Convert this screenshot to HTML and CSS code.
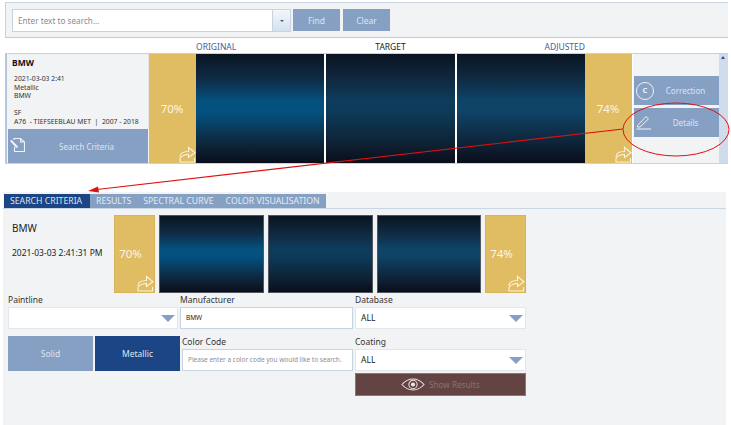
FILE: index.html
```html
<!DOCTYPE html>
<html lang="en">
<head>
<meta charset="utf-8">
<title>Search</title>
<link rel="stylesheet" href="styles.css">
</head>
<body>
<svg width="0" height="0" class="defs">
  <symbol id="share" viewBox="0 0 17 17">
    <path d="M1 11C1 7.500 4 5.500 9.500 5.500V1.500L16 6.800L9.500 11.500V8.500C5.500 8.500 3 9.500 1 12.500V16H15.500V12" fill="none" stroke="currentColor" stroke-width="1.100"/>
  </symbol>
</svg>
<div class="page">
  <section class="searchbar">
    <div class="combo">
      <span class="combo-text">Enter text to search...</span>
      <span class="combo-btn"><i class="mini-caret"></i></span>
    </div>
    <button class="btn">Find</button>
    <button class="btn">Clear</button>
  </section>
  <div class="headers">
    <span class="h-original">ORIGINAL</span>
    <span class="h-target">TARGET</span>
    <span class="h-adjusted">ADJUSTED</span>
  </div>
  <section class="result">
    <div class="info">
      <div class="info-text">
        <h2>BMW</h2>
        <p>2021-03-03 2:41<br>Metallic<br>BMW<br><br>SF<br>A76 &nbsp;- TIEFSEEBLAU MET &nbsp;| &nbsp;2007 - 2018</p>
      </div>
      <div class="criteria">
        <svg class="criteria-icon" viewBox="0 0 16 16" width="16" height="16"><path d="M5 3V1.500H11.500L15.500 5V14.500H5.500V10M11.500 1.500V5H15.500" fill="none" stroke="currentColor" stroke-width="1.100"/><path d="M1 4L2.500 2.800L8.500 9L8.800 11L6.800 10.500Z" fill="currentColor"/></svg>
        <span>Search Criteria</span>
      </div>
    </div>
    <div class="score">70%<svg class="share"><use href="#share"/></svg></div>
    <div class="panel panel-original"></div>
    <div class="panel panel-target"></div>
    <div class="panel panel-adjusted"></div>
    <div class="score score-right">74%<svg class="share"><use href="#share"/></svg></div>
    <div class="actions">
      <div class="action">
        <span class="c-icon">C</span>
        <span class="action-label">Correction</span>
      </div>
      <div class="action">
        <svg class="pen-icon" viewBox="0 0 16 16" width="16" height="16"><path d="M1.500 11.500L10 2.500L12.500 4.800L4 13H1.500ZM0.500 15H15" fill="none" stroke="currentColor" stroke-width="1"/></svg>
        <span class="action-label">Details</span>
      </div>
    </div>
    <div class="scroll"><i class="up-caret"></i></div>
  </section>
  <section class="details">
    <nav class="tabs">
      <span class="tab tab-active">SEARCH CRITERIA</span>
      <span class="tab">RESULTS</span>
      <span class="tab">SPECTRAL CURVE</span>
      <span class="tab">COLOR VISUALISATION</span>
    </nav>
    <div class="summary">
      <div class="summary-text">
        <div class="summary-name">BMW</div>
        <div class="summary-date">2021-03-03 2:41:31 PM</div>
      </div>
      <div class="score score-small">70%<svg class="share"><use href="#share"/></svg></div>
      <div class="panel panel-small panel-original"></div>
      <div class="panel panel-small panel-target"></div>
      <div class="panel panel-small panel-adjusted"></div>
      <div class="score score-small">74%<svg class="share"><use href="#share"/></svg></div>
    </div>
    <div class="form">
      <div class="field f-paint">
        <label>Paintline</label>
        <div class="select"><i class="caret"></i></div>
      </div>
      <div class="field f-manu">
        <label>Manufacturer</label>
        <div class="select select-blue small-text">BMW</div>
      </div>
      <div class="field f-db">
        <label>Database</label>
        <div class="select">ALL<i class="caret"></i></div>
      </div>
      <div class="toggles">
        <span class="toggle">Solid</span>
        <span class="toggle toggle-on">Metallic</span>
      </div>
      <div class="field f-code">
        <label>Color Code</label>
        <div class="select select-blue hint">Please enter a color code you would like to search.</div>
      </div>
      <div class="field f-coat">
        <label>Coating</label>
        <div class="select">ALL<i class="caret"></i></div>
        <div class="show">
          <svg viewBox="0 0 26 14" width="24" height="13"><path d="M1 7C5 2.500 9 1 13 1S21 2.500 25 7C21 11.500 17 13 13 13S5 11.500 1 7Z" fill="none" stroke="currentColor" stroke-width="1.100"/><circle cx="13" cy="7" r="4.500" fill="none" stroke="currentColor" stroke-width="1.100"/><circle cx="13" cy="7" r="2.300" fill="currentColor"/></svg>
          <span>Show Results</span>
        </div>
      </div>
    </div>
  </section>
  <svg class="annotation" viewBox="0 0 731 425" width="731" height="425">
    <ellipse cx="676" cy="129.500" rx="53" ry="26.500" fill="none" stroke="#e01010" stroke-width="1"/>
    <path d="M623 129L97 189.500" fill="none" stroke="#e01010" stroke-width="1.200"/>
    <path d="M88 191L98 186.500L99 192.500Z" fill="#e01010"/>
  </svg>
</div>
</body>
</html>
```
FILE: styles.css
```css
* { box-sizing: border-box; }
html, body { margin: 0; padding: 0; background: #fff; }
body { font-family: "Noto Sans", "Open Sans", sans-serif; color: #222; overflow: hidden; }
.defs { position: absolute; }
.page { position: relative; width: 731px; height: 425px; overflow: hidden; }

.searchbar { margin: 2px 3px 0 5px; height: 36px; background: #f1f3f5; border: 1px solid #c9d3df; border-bottom: 1px solid #c8c8c8; border-right: 0; display: flex; align-items: flex-start; padding: 6px 0 0 6px; }
.combo { width: 279px; height: 23px; background: #fff; border: 1px solid #c6d3e3; display: flex; justify-content: space-between; margin-right: 2px; }
.combo-text { font-size: 8.200px; line-height: 21px; color: #8c8c8c; padding-left: 5px; }
.combo-btn { width: 18px; border-left: 1px solid #c6d3e3; background: linear-gradient(#f3f7fb, #d5e1ef); display: flex; align-items: center; justify-content: center; }
.mini-caret { border: 2px solid transparent; border-top: 2px solid #556; border-bottom: 0; }
.btn { width: 47px; height: 22px; margin-right: 3px; border: 0; padding: 0; background: #86a0c3; color: #dfe6ef; font: 8.500px "Noto Sans", sans-serif; }

.headers { height: 16px; margin: 0 3px 0 5px; border-bottom: 1px solid #cfcfcf; display: grid; grid-template-columns: 191px 128px 2px 129px 2px 128px; font-size: 8.500px; line-height: 17px; }
.h-original { grid-column: 2; color: #3f62a0; }
.h-target { grid-column: 4; color: #222; text-align: center; }
.h-adjusted { grid-column: 6; color: #3f62a0; text-align: right; }

.result { margin: 0 3px 0 5px; height: 110px; display: flex; border-bottom: 1px solid #c9d3df; }
.info { width: 144px; flex: none; padding-left: 1px; border-left: 2px solid #b5c7de; background: #f1f3f5; display: flex; flex-direction: column; }
.info-text { flex: 1; padding-left: 4px; border-right: 1px solid #e5e5e5; }
.info-text h2 { margin: 2px 0 0 0; font-size: 8.500px; line-height: 14px; font-weight: 700; color: #111; }
.info-text p { margin: 5px 0 0 2px; font-size: 6.800px; line-height: 8.500px; color: #333; white-space: nowrap; }
.criteria { height: 34px; background: #86a0c3; color: #dde5ef; display: flex; align-items: center; font-size: 8px; padding-left: 1px; margin-right: 1px; }
.criteria-icon { flex: none; color: #eef2f7; margin-top: -3px; }
.criteria span { margin-left: 34px; }

.score { width: 47px; flex: none; background: #e0bc62; color: #fbf6e6; font-size: 11.500px; display: flex; align-items: center; justify-content: center; position: relative; padding-right: 1px; }
.share { position: absolute; right: 0; bottom: 0; width: 17px; height: 17px; color: #fbf3dc; }
.panel { flex: none; width: 128px; }
.panel-original { background: linear-gradient(#0a1522, #0f2b43 22%, #04507f 43%, #04507f 54%, #0e2335 85%, #0a0e1c); }
.panel-target { margin: 0 2px; width: 129px; background: linear-gradient(#0a1421, #10283f 22%, #0e3c5c 43%, #0d3a58 54%, #0e1f30 85%, #0a0d1b); }
.panel-adjusted { background: linear-gradient(#0a1522, #0f2a41 22%, #0f4469 43%, #0f4267 54%, #0e2032 85%, #0a0d1b); }
.actions { width: 86px; flex: none; margin-left: 1px; background: #f1f3f5; padding: 22px 0 0 1px; display: flex; flex-direction: column; gap: 3px; }
.action { height: 29px; width: 85px; background: #86a0c3; color: #dde5ef; display: flex; align-items: center; font-size: 8px; position: relative; }
.action-label { flex: 1; text-align: center; padding-left: 18px; }
.c-icon { position: absolute; left: 2px; top: 6px; width: 18px; height: 18px; border: 1.500px solid #eef2f7; border-radius: 50%; font-size: 7.500px; font-weight: 700; line-height: 15px; text-align: center; color: #eef2f7; }
.pen-icon { position: absolute; left: 2px; top: 6px; color: #eef2f7; }
.scroll { width: 9px; flex: none; background: #d0dcec; position: relative; }
.up-caret { position: absolute; left: 2px; top: 2px; border: 2.500px solid transparent; border-bottom: 3px solid #33527f; border-top: 0; }

.details { position: absolute; left: 3px; right: 5px; top: 192px; bottom: 0; background: #f1f3f5; }
.tabs { display: flex; height: 17px; padding: 2px 0 0 1px; border-bottom: 1px solid #c9d6e6; }
.tab { background: #86a0c3; color: #e4eaf2; font-size: 8.700px; line-height: 15px; padding: 0 6px; white-space: nowrap; }
.tab-active { background: #1b4585; color: #dbe4f0; width: 86px; }
.summary { display: flex; height: 78px; margin-top: 6px; }
.summary-text { width: 111px; padding-left: 9px; font-size: 8.500px; }
.summary-name { font-size: 10px; line-height: 14px; margin-top: 6px; }
.summary-date { margin-top: 12px; font-size: 8.500px; line-height: 12px; white-space: nowrap; }
.score-small { width: 41px; border: 1px solid #d6b35c; padding-right: 8px; padding-bottom: 2px; }
.panel-small { width: 105px; margin: 0 0 0 4px; border: 1px solid #50565e; }
.panel-small.panel-adjusted { margin-right: 4px; width: 104px; }

.form { display: grid; grid-template-columns: 172px 175px 171px; grid-template-rows: 36px 67px; margin-left: 5px; }
.field label { display: block; font-size: 8.500px; line-height: 14px; color: #333; }
.select { position: relative; height: 22px; background: #fff; border: 1px solid #e3e6ea; font-size: 8.500px; line-height: 20px; padding-left: 5px; }
.select-blue { border-color: #c6d3e3; }
.small-text { font-size: 6.500px; }
.hint { font-size: 6.500px; color: #8a8f96; white-space: nowrap; }
.caret { position: absolute; right: 2px; top: 7px; border: 7px solid transparent; border-top: 7px solid #86a0c3; border-bottom: 0; }
.f-paint .select { width: 170px; }
.f-manu .select { width: 173px; }
.f-db .select, .f-coat .select { width: 171px; }
.toggles { display: flex; gap: 2px; margin-top: 7px; height: 35px; }
.toggle { width: 85px; background: #86a0c3; color: #dde5ef; font-size: 8.500px; display: flex; align-items: center; justify-content: center; }
.toggle-on { background: #1b4585; }
.f-code { margin-top: 6px; margin-left: 2px; }
.f-code .select { width: 171px; }
.f-coat { margin-top: 6px; }
.show { width: 171px; height: 23px; margin-top: 2px; background: #644343; border: 1px solid #8d7676; color: #ece6e4; display: flex; align-items: center; padding-left: 45px; gap: 4px; }
.show span { font-size: 8.200px; color: #847474; }
.annotation { position: absolute; left: 0; top: 0; pointer-events: none; }
```
